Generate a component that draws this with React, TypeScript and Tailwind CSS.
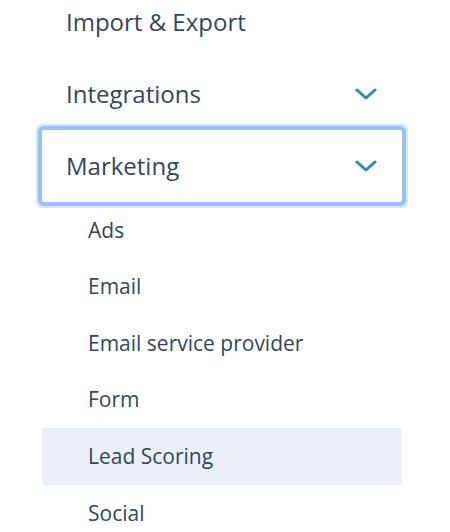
import React from 'react';

const Chevron = () => (
  <svg width="22" height="12" viewBox="0 0 22 12" fill="none" className="shrink-0">
    <path d="M2 2l9 8 9-8" stroke="#2e8ba5" strokeWidth="3" strokeLinecap="round" strokeLinejoin="round" />
  </svg>
);

const subItems = ['Ads', 'Email', 'Email service provider', 'Form', 'Lead Scoring', 'Social'];

export default function App() {
  return (
    <div className="w-[450px] h-[532px] overflow-hidden bg-white text-[#33475b]" style={{ fontFamily: '"Open Sans", sans-serif' }}>
      <div className="mt-[-14px] ml-[42px] w-[360px]">
        <div className="h-[72px] flex items-center pl-6 text-[24px]">Import &amp; Export</div>
        <div className="h-[72px] flex items-center justify-between pl-6 pr-[25px] text-[24px]">
          <span>Integrations</span>
          <Chevron />
        </div>
        <div className="h-[72px] flex items-center justify-between pl-6 pr-[25px] text-[24px] rounded-[2px] outline-4 outline-[#97c2f6] shadow-[0_0_0_6px_#d5e6fc]">
          <span>Marketing</span>
          <Chevron />
        </div>
        <div className="flex flex-col">
          {subItems.map((item) => (
            <div
              key={item}
              className={`h-[56.6px] flex items-center pl-[46px] text-[21px] ${item === 'Lead Scoring' ? 'bg-[#eaf0f6]' : ''}`}
            >
              {item}
            </div>
          ))}
        </div>
      </div>
    </div>
  );
}
